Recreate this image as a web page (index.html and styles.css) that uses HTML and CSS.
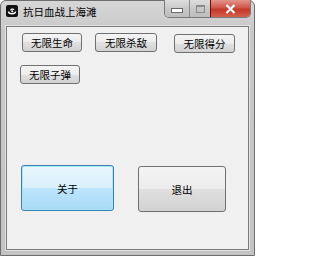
FILE: index.html
```html
<!DOCTYPE html>
<html>
<head>
<meta charset="utf-8">
<link rel="stylesheet" href="styles.css">
</head>
<body>
<div class="window">
  <div class="titlebar">
    <svg class="appicon" width="12" height="12" viewBox="0 0 12 12">
      <rect x="0" y="0" width="12" height="12" rx="2" fill="#111"/>
      <path d="M2.5 6.5 C2.5 9.5 9.5 9.5 9.5 6.5" stroke="#fff" stroke-width="1.4" fill="none"/>
      <path d="M4 5.5 C4.5 3 8 3 8.5 5.2 C7 4.3 5.5 4.5 4 5.5 Z" fill="#fff"/>
      <circle cx="6.2" cy="6.3" r="1.1" fill="#fff"/>
    </svg>
    <span class="title">抗日血战上海滩</span>
    <div class="caption">
      <div class="cbtn min"><span class="minbar"></span></div>
      <div class="cbtn max"><span class="maxbox"></span></div>
      <div class="cbtn close">
        <svg width="11" height="10" viewBox="0 0 11 10"><path d="M1.5 1 L9.5 9 M9.5 1 L1.5 9" stroke="#fff" stroke-width="2.2"/></svg>
      </div>
    </div>
  </div>
  <div class="client">
    <div class="row1">
      <button class="btn w60">无限生命</button>
      <button class="btn w62 g1">无限杀敌</button>
      <button class="btn w61 g2">无限得分</button>
    </div>
    <div class="row2">
      <button class="btn w60">无限子弹</button>
    </div>
    <div class="row3">
      <button class="big focus">关于</button>
      <button class="big plain">退出</button>
    </div>
  </div>
</div>
</body>
</html>
```
FILE: styles.css
```css
html, body {
  margin: 0;
  padding: 0;
  background: #fff;
}
.window {
  width: 255px;
  height: 256px;
  box-sizing: border-box;
  border: 1px solid #6e6e6e;
  border-radius: 6px 6px 0 0;
  background: linear-gradient(#d6d6d6, #c9c9c9 30px, #c3c3c3);
  display: flex;
  flex-direction: column;
  font-family: "Noto Sans CJK SC", "Noto Sans", sans-serif;
}
.titlebar {
  height: 25px;
  flex: none;
  display: flex;
  align-items: flex-start;
  position: relative;
}
.appicon {
  margin: 4px 0 0 5px;
  flex: none;
}
.title {
  margin: 4px 0 0 5px;
  font-size: 10.5px;
  line-height: 14px;
  color: #000;
}
.caption {
  position: absolute;
  top: -1px;
  left: 163px;
  display: flex;
  height: 17px;
  border: 1px solid #7a7a7a;
  border-top: none;
  border-radius: 0 0 5px 5px;
  overflow: hidden;
}
.cbtn {
  height: 17px;
  display: flex;
  align-items: center;
  justify-content: center;
  box-sizing: border-box;
}
.min {
  width: 25px;
  background: linear-gradient(#dedede, #c8c8c8 50%, #bdbdbd);
  border-right: 1px solid #8a8a8a;
}
.max {
  width: 21px;
  background: linear-gradient(#dedede, #c8c8c8 50%, #bdbdbd);
  border-right: 1px solid #8a0000;
}
.close {
  width: 39px;
  background: linear-gradient(#e2958c, #d0574a 45%, #c43828 55%, #d2604f);
}
.minbar {
  width: 10px;
  height: 3px;
  background: #fff;
  border: 1px solid #6a6a6a;
  margin-top: 4px;
}
.maxbox {
  width: 7px;
  height: 5px;
  border: 1px solid #8a8a8a;
  border-top-width: 2px;
  background: transparent;
}
.client {
  flex: 1;
  margin: 0 5px 5px 5px;
  border: 1px solid #7c7c7c;
  box-shadow: 0 0 0 1px #e2e2e2;
  background: #f0f0f0;
  padding: 6px 0 0 15px;
  display: flex;
  flex-direction: column;
}
.row1 {
  display: flex;
  align-items: flex-start;
}
.row2 {
  display: flex;
  margin: 12px 0 0 -2px;
}
.row3 {
  display: flex;
  align-items: flex-start;
  margin: 81px 0 0 -1px;
}
.btn {
  height: 19px;
  padding: 0;
  box-sizing: border-box;
  border: 1px solid #707070;
  border-radius: 3px;
  background: linear-gradient(#f4f4f4, #ececec 50%, #e0e0e0 50%, #d2d2d2);
  font-family: "Noto Sans CJK SC", "Noto Sans", sans-serif;
  font-size: 10.5px;
  line-height: 16px;
  color: #000;
}
.w60 { width: 60px; }
.w61 { width: 61px; }
.w62 { width: 62px; }
.g1 { margin-left: 13px; }
.g2 { margin-left: 17px; margin-top: 1px; }
.big {
  height: 46px;
  padding: 0;
  box-sizing: border-box;
  border-radius: 3px;
  font-family: "Noto Sans CJK SC", "Noto Sans", sans-serif;
  font-size: 10.5px;
  color: #000;
}
.focus {
  width: 93px;
  border: 1px solid #3c7fb1;
  box-shadow: inset 0 0 0 1px #a6e6f7;
  background: linear-gradient(#eaf6fd, #d9f0fc 50%, #bee6fd 50%, #a7d9f5);
}
.plain {
  width: 88px;
  margin-left: 24px;
  margin-top: 1px;
  border: 1px solid #707070;
  background: linear-gradient(#f4f4f4, #ececec 50%, #e0e0e0 50%, #d2d2d2);
}
```
